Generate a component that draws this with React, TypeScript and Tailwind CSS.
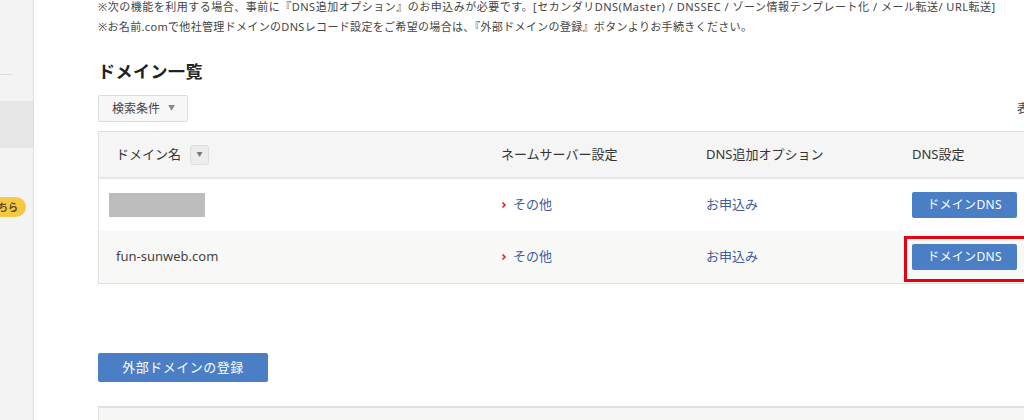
import React from "react";

const font = { fontFamily: '"Noto Sans", "Noto Sans CJK JP", sans-serif' };

function DnsButton() {
  return (
    <button className="w-[105px] h-[26px] rounded-[2px] bg-[#4a7ec5] text-white text-[12px] tracking-[0.3px] flex items-center justify-center">
      ドメインDNS
    </button>
  );
}

function Chevron() {
  return (
    <svg width="6" height="8" viewBox="0 0 6 8" className="mr-[6px]">
      <path d="M1.5 1.5 L4 4 L1.5 6.5" stroke="#d9262c" strokeWidth="1.6" fill="none" />
    </svg>
  );
}

export default function App() {
  return (
    <div className="w-[1024px] h-[420px] overflow-hidden flex bg-white text-[#333]" style={font}>
      {/* Sidebar */}
      <div className="w-[34px] shrink-0 bg-[#f3f3f3] border-r border-[#dedede] flex flex-col overflow-hidden">
        <div className="h-[74px]" />
        <div className="w-[12px] h-px bg-[#dcdcdc]" />
        <div className="h-[26px]" />
        <div className="h-[47px] bg-[#e6e6e6]" />
        <div className="h-[49px]" />
        <div className="ml-[-24px] w-[50px] h-[20px] rounded-full bg-[#f6c944] flex items-center justify-end pr-[8px] text-[10px] font-bold text-[#5a4a1a] leading-none">
          こちら
        </div>
      </div>

      {/* Main */}
      <div className="flex-1 pl-[64px] overflow-hidden">
        <div className="w-[980px]">
          <div className="mt-[-3px] text-[11px] leading-[20px] text-[#444]">
            <p className="whitespace-nowrap tracking-[0.5px]">
              ※次の機能を利用する場合、事前に『DNS追加オプション』のお申込みが必要です。[セカンダリDNS(Master) / DNSSEC / ゾーン情報テンプレート化 / メール転送/ URL転送]
            </p>
            <p className="whitespace-nowrap tracking-[0.33px]">
              ※お名前.comで他社管理ドメインのDNSレコード設定をご希望の場合は、『外部ドメインの登録』ボタンよりお手続きください。
            </p>
          </div>

          <h2 className="mt-[23px] text-[17px] leading-[24px] font-bold tracking-[0.5px] text-[#222]">ドメイン一覧</h2>

          <div className="mt-[11px] flex items-center justify-between">
            <button className="h-[27px] w-[90px] border border-[#dcdcdc] bg-[#f7f7f7] rounded-[2px] flex items-center pl-[13px] text-[12px] text-[#444]">
              検索条件
              <span className="ml-[8px] text-[7px] text-[#888]">▼</span>
            </button>
            <span className="text-[12px] text-[#444] mr-[13px]">表示件数</span>
          </div>

          {/* Table */}
          <div className="mt-[9px] border border-[#e0e0e0] text-[13px]">
            <div className="grid grid-cols-[384px_205px_206px_1fr] h-[47px] items-center bg-[#f5f5f5] border-b-2 border-[#e6e6e6] text-[#333]">
              <div className="pl-[17px] flex items-center">
                ドメイン名
                <span className="ml-[9px] w-[19px] h-[20px] rounded-[3px] border border-[#dedede] bg-[#ececec] flex items-center justify-center text-[6px] text-[#777]">▼</span>
              </div>
              <div className="pl-[18px]">ネームサーバー設定</div>
              <div className="pl-[18px]">DNS追加オプション</div>
              <div className="pl-[18px]">DNS設定</div>
            </div>

            <div className="grid grid-cols-[384px_205px_206px_1fr] h-[52px] items-center bg-white">
              <div className="pl-[10px]">
                <div className="w-[96px] h-[24px] bg-[#bdbdbd]" />
              </div>
              <div className="pl-[18px] flex items-center text-[#3e5c9c]">
                <Chevron />
                その他
              </div>
              <div className="pl-[18px] text-[#3e5c9c]">お申込み</div>
              <div className="pl-[18px]">
                <DnsButton />
              </div>
            </div>

            <div className="grid grid-cols-[384px_205px_206px_1fr] h-[52px] items-center bg-[#f8f8f7]">
              <div className="pl-[17px] text-[#444]">fun-sunweb.com</div>
              <div className="pl-[18px] flex items-center text-[#3e5c9c]">
                <Chevron />
                その他
              </div>
              <div className="pl-[18px] text-[#3e5c9c]">お申込み</div>
              <div className="pl-[18px]">
                <div className="relative w-fit">
                  <DnsButton />
                  <div className="absolute left-[-8px] top-[-8px] w-[125px] h-[46px] border-[3px] border-[#e50012]" />
                </div>
              </div>
            </div>
          </div>

          <button className="mt-[69px] w-[170px] h-[29px] rounded-[2px] bg-[#4a7ec5] text-white text-[13px] tracking-[0.5px] flex items-center justify-center">
            外部ドメインの登録
          </button>

          <div className="mt-[24px] h-[40px] border-t-2 border-l border-[#e0e0e0] bg-[#f6f6f5]" />
        </div>
      </div>
    </div>
  );
}
